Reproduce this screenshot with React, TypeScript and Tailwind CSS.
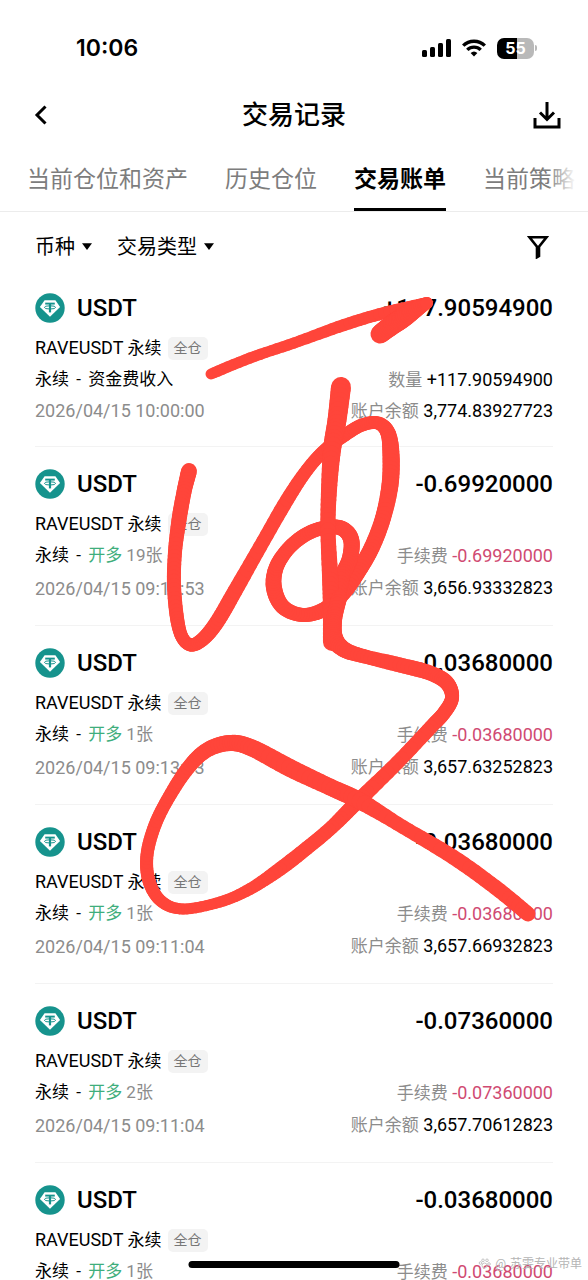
import React from 'react';

type Bill = {
  id: number;
  amount: string;
  kind: string;
  side?: string;
  lots?: string;
  time: string;
  feeLabel: string;
  fee: string;
  balance: string;
};

const bills: Bill[] = [
  { id: 1, amount: '+117.90594900', kind: '资金费收入', time: '2026/04/15 10:00:00', feeLabel: '数量', fee: '+117.90594900', balance: '3,774.83927723' },
  { id: 2, amount: '-0.69920000', kind: '', side: '开多', lots: '19张', time: '2026/04/15 09:14:53', feeLabel: '手续费', fee: '-0.69920000', balance: '3,656.93332823' },
  { id: 3, amount: '-0.03680000', kind: '', side: '开多', lots: '1张', time: '2026/04/15 09:13:33', feeLabel: '手续费', fee: '-0.03680000', balance: '3,657.63252823' },
  { id: 4, amount: '-0.03680000', kind: '', side: '开多', lots: '1张', time: '2026/04/15 09:11:04', feeLabel: '手续费', fee: '-0.03680000', balance: '3,657.66932823' },
  { id: 5, amount: '-0.07360000', kind: '', side: '开多', lots: '2张', time: '2026/04/15 09:11:04', feeLabel: '手续费', fee: '-0.07360000', balance: '3,657.70612823' },
  { id: 6, amount: '-0.03680000', kind: '', side: '开多', lots: '1张', time: '2026/04/15 09:11:04', feeLabel: '手续费', fee: '-0.03680000', balance: '3,657.77972823' },
];

const tabs = ['当前仓位和资产', '历史仓位', '交易账单', '当前策略'];

// Pen strokes: x, y, pen width
type Point = [number, number, number];

const strokes: Point[][] = [
  [[211, 374, 11], [250, 358, 11], [294, 343, 11], [344, 325, 12], [384, 313, 12], [427, 303, 12]],
  [[380, 334, 19], [392, 325, 20], [404, 317, 20], [416, 309, 17], [427, 303, 12]],
  [
    [189, 471, 16], [184, 492, 15], [179, 520, 15], [175, 552, 14], [174, 585, 14], [177, 618, 14], [182, 637, 13],
    [191, 645, 13], [203, 639, 14], [217, 622, 15], [235, 591, 15], [260, 547, 14], [287, 500, 14], [307, 470, 13],
    [325, 450, 13], [345, 435, 13], [362, 425, 13], [378, 423, 13], [388, 433, 15], [391, 455, 17], [390, 485, 17],
    [383, 518, 16], [372, 547, 16], [359, 570, 16], [343, 593, 16], [325, 609, 15], [303, 615, 14], [283, 607, 15],
    [274, 588, 16], [276, 568, 15], [288, 549, 14], [305, 535, 14], [323, 528, 14], [341, 528, 15], [351, 539, 16],
    [350, 558, 16], [342, 577, 16], [337, 600, 16],
  ],
  [[341, 387, 20], [337, 420, 19], [332, 450, 18], [329, 490, 16], [328, 530, 15], [330, 575, 16], [331, 610, 16], [332, 642, 18]],
  [
    [339, 598, 16], [334, 620, 16], [334, 638, 18], [345, 650, 16], [367, 657, 14], [400, 665, 15], [430, 673, 15],
    [447, 683, 15], [452, 698, 14], [444, 713, 14], [431, 727, 14], [397, 763, 14], [358, 801, 15], [332, 827, 14],
    [307, 848, 14], [280, 869, 14], [250, 889, 12], [220, 902, 11], [183, 909, 11], [161, 901, 12], [149, 881, 13],
    [147, 855, 13], [155, 825, 13], [169, 797, 13], [188, 768, 14], [207, 750, 15], [230, 743, 16], [252, 748, 17],
    [290, 768, 18], [330, 787, 17], [360, 801, 17], [403, 827, 14], [453, 857, 15], [495, 887, 15], [528, 914, 15],
  ],
];

// Catmull-Rom interpolation, eight steps per span
function smooth(points: Point[]): Point[] {
  const out: Point[] = [];
  for (let i = 0; i < points.length - 1; i++) {
    const p0 = points[Math.max(i - 1, 0)];
    const p1 = points[i];
    const p2 = points[i + 1];
    const p3 = points[Math.min(i + 2, points.length - 1)];
    for (let s = 0; s < 8; s++) {
      const t = s / 8;
      out.push([0, 1, 2].map((k) =>
        0.5 * (2 * p1[k] + (p2[k] - p0[k]) * t + (2 * p0[k] - 5 * p1[k] + 4 * p2[k] - p3[k]) * t * t +
          (3 * p1[k] - p0[k] - 3 * p2[k] + p3[k]) * t * t * t)
      ) as Point);
    }
  }
  out.push(points[points.length - 1]);
  return out;
}

function Scribble() {
  return (
    <svg
      className="absolute inset-x-0 top-0 w-full pointer-events-none"
      viewBox="0 0 588 1280"
      stroke="#ff453a"
      strokeLinecap="round"
      aria-hidden="true"
    >
      {strokes.map((stroke, i) => {
        const pts = smooth(stroke);
        return pts.slice(1).map((p, j) => (
          <line key={`${i}-${j}`} x1={pts[j][0]} y1={pts[j][1]} x2={p[0]} y2={p[1]} strokeWidth={p[2]} />
        ));
      })}
    </svg>
  );
}

function StatusBar() {
  return (
    <div className="flex h-24 shrink-0 items-center justify-between pl-[76px] pr-[51px]">
      <span className="font-['Inter',sans-serif] text-[23px] font-semibold">10:06</span>
      <div className="flex items-center gap-[11px]">
        <svg width="29" height="20" viewBox="0 0 29 20" aria-hidden="true">
          <rect x="0" y="12" width="5" height="7" rx="1.5" />
          <rect x="8" y="9" width="5" height="10" rx="1.5" />
          <rect x="16" y="5" width="5" height="14" rx="1.5" />
          <rect x="24" y="1" width="5" height="18" rx="1.5" />
        </svg>
        <svg width="24" height="20" viewBox="0 0 24 20" fill="none" stroke="#000" strokeWidth="3.4" aria-hidden="true">
          <path d="M1.2 7.6a15.4 15.4 0 0 1 21.6 0" />
          <path d="M5.3 11.9a9.5 9.5 0 0 1 13.4 0" />
          <path d="M12 18.6l-3.4-3.5a5 5 0 0 1 6.8 0z" fill="#000" stroke="none" />
        </svg>
        <div className="flex items-center gap-px">
          <div className="flex h-[21px] w-[37px] items-center justify-center rounded-[7px] bg-linear-to-r from-black from-55% to-[#b9b9b9] to-55% font-['Inter',sans-serif] text-[16px] font-bold text-white">
            55
          </div>
          <div className="h-[6px] w-[2px] rounded-r-full bg-[#b9b9b9]" />
        </div>
      </div>
    </div>
  );
}

function TetherIcon() {
  return (
    <svg width="30" height="30" viewBox="0 0 30 30" aria-hidden="true">
      <circle cx="15" cy="15" r="14.7" fill="#16938d" />
      <path d="M9.6 7.3h10.8l4.7 6.7L15 23.8 4.9 14z" fill="#fff" />
      <g fill="none" stroke="#16938d">
        <path d="M10.2 10.6h9.6" strokeWidth="1.9" />
        <path d="M15 10.6v8.8" strokeWidth="2.2" />
        <ellipse cx="15" cy="14.4" rx="5.6" ry="1.6" strokeWidth="1" />
      </g>
    </svg>
  );
}

function FilterSelect({ label }: { label: string }) {
  return (
    <label className="flex items-center gap-[7px]">
      <select aria-label={label} className="appearance-none bg-transparent text-[20px] leading-7 outline-none">
        <option>{label}</option>
      </select>
      <svg width="10" height="7" viewBox="0 0 10 7" aria-hidden="true">
        <path d="M0 .3h10L5 7z" />
      </svg>
    </label>
  );
}

function BillRow({ bill }: { bill: Bill }) {
  const trade = Boolean(bill.side);
  return (
    <li className="border-b border-[#f3f3f3] pt-[17px] pb-5 text-[18px]">
      <div className="flex h-10 items-center justify-between text-[24px] font-medium">
        <div className="flex items-center gap-3">
          <TetherIcon />
          <span>USDT</span>
        </div>
        <span>{bill.amount}</span>
      </div>
      <div className="mt-1 flex h-8 items-center gap-[6px]">
        <span>
          RAVEUSDT <span className="text-[17px]">永续</span>
        </span>
        <span className="rounded-[5px] bg-[#f3f3f3] px-[6px] text-[14px] leading-[23px] text-[#777]">全仓</span>
      </div>
      <div className="flex h-[31px] items-center justify-between">
        <span className="text-[17px]">
          永续 <span className="px-[3px]">-</span> {bill.kind}
          {trade && <span className="text-[#3fae7c]">{bill.side}</span>}
          {trade && <span className="text-[#8c8c8c]"> {bill.lots}</span>}
        </span>
        <span>
          <span className="text-[17px] text-[#8c8c8c]">{bill.feeLabel}</span>{' '}
          <span className={trade ? 'text-[#d04a72]' : ''}>{bill.fee}</span>
        </span>
      </div>
      <div className={trade ? 'flex h-[34px] items-center justify-between' : 'flex h-[31px] items-center justify-between'}>
        <time className="text-[#8c8c8c]">{bill.time}</time>
        <span>
          <span className="text-[17px] text-[#8c8c8c]">账户余额</span> {bill.balance}
        </span>
      </div>
    </li>
  );
}

export default function App() {
  return (
    <div className="relative flex h-screen flex-col overflow-hidden bg-white font-['Roboto','Noto_Sans_CJK_SC',sans-serif] text-black">
      <StatusBar />

      <header className="flex h-[38px] shrink-0 items-center justify-between pl-[34px] pr-[26px]">
        <button aria-label="返回" className="flex w-6">
          <svg width="14" height="20" viewBox="0 0 14 20" fill="none" stroke="#000" strokeWidth="3" aria-hidden="true">
            <path d="M11.5 1.5L3 10l8.5 8.5" />
          </svg>
        </button>
        <h1 className="text-[26px] font-medium">交易记录</h1>
        <button aria-label="下载" className="flex w-8 justify-end">
          <svg width="30" height="28" viewBox="0 0 30 28" fill="none" stroke="#000" strokeWidth="3" aria-hidden="true">
            <path d="M15 1v17M8 11.5l7 7 7-7M3 17v9h24v-9" />
          </svg>
        </button>
      </header>

      <nav className="relative shrink-0 border-b border-[#ececec] pt-[14px]">
        <div className="mr-3 flex h-[63px] gap-[37px] overflow-hidden pl-[27px] text-[23px] whitespace-nowrap">
          {tabs.map((tab) => (
            <button
              key={tab}
              className={
                tab === '交易账单'
                  ? 'shrink-0 border-b-[3px] border-black pt-1 font-bold'
                  : 'shrink-0 border-b-[3px] border-transparent pt-1 text-[#7d7d7d]'
              }
            >
              {tab}
            </button>
          ))}
        </div>
        <div className="absolute top-0 right-3 h-16 w-7 bg-linear-to-r from-transparent to-white" />
      </nav>

      <div className="flex h-[59px] shrink-0 items-center justify-between pt-[10px] pr-[39px] pl-[35px]">
        <div className="flex gap-[25px]">
          <FilterSelect label="币种" />
          <FilterSelect label="交易类型" />
        </div>
        <button aria-label="筛选">
          <svg width="22" height="24" viewBox="0 0 22 24" fill="none" stroke="#000" strokeWidth="2.6" aria-hidden="true">
            <path d="M2.5 2.3h17L12 11.6v9.4l-2 1.2V11.6z" />
          </svg>
        </button>
      </div>

      <ul className="min-h-0 flex-1 overflow-hidden px-[35px]">
        {bills.map((bill) => (
          <BillRow key={bill.id} bill={bill} />
        ))}
      </ul>

      <div className="absolute right-[6px] bottom-[7px] flex items-center gap-1 text-[12px] leading-[18px] text-[#b5b5b5]">
        <svg width="13" height="13" viewBox="0 0 13 13" fill="none" stroke="#c4c4c4" aria-hidden="true">
          <circle cx="6.5" cy="7.5" r="2.5" />
          <circle cx="2.5" cy="5" r="1.3" />
          <circle cx="5" cy="2.3" r="1.3" />
          <circle cx="9" cy="2.3" r="1.3" />
          <circle cx="11" cy="6" r="1.3" />
        </svg>
        <span>@</span>
        <span>苏雯专业带单</span>
      </div>
      <div className="absolute bottom-3 left-1/2 h-[7px] w-[211px] -translate-x-1/2 rounded-full bg-black" />
      <Scribble />
    </div>
  );
}
